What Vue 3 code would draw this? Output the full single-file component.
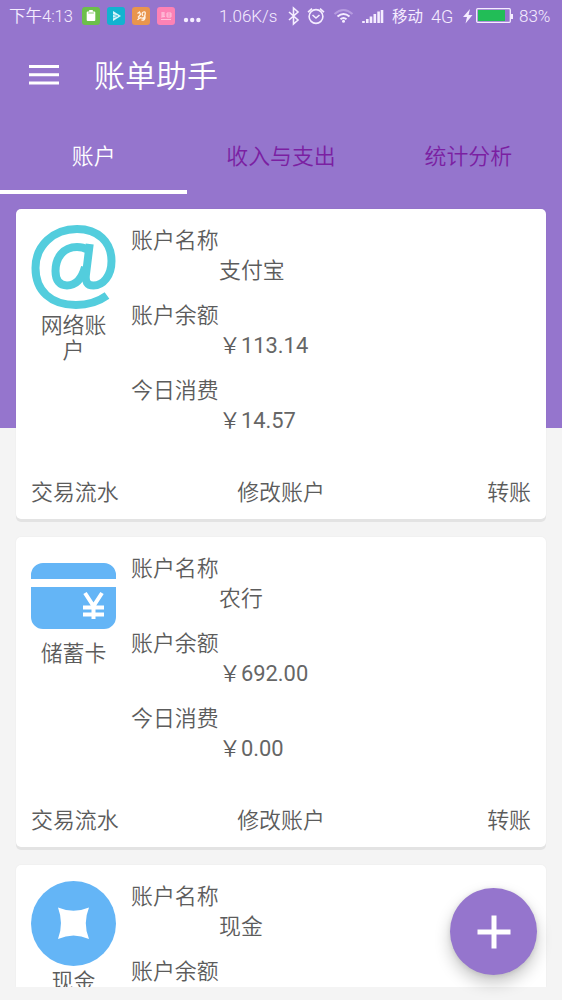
<script setup>
const tabs = ['账户', '收入与支出', '统计分析']
const accounts = [
  { kind: 'web', type: '网络账户', name: '支付宝', balance: '113.14', spent: '14.57' },
  { kind: 'card', type: '储蓄卡', name: '农行', balance: '692.00', spent: '0.00' },
  { kind: 'cash', type: '现金', name: '现金' }
]
const rowsOf = (a) => [
  { label: '账户名称', value: a.name },
  { label: '账户余额', amount: a.balance },
  { label: '今日消费', amount: a.spent }
].filter((r, i) => r.value || r.amount || i === 1)
</script>

<template>
  <div class="screen">
    <div class="status">
      <span class="clock">下午4:13</span>
      <svg class="apps" viewBox="0 0 94 18">
        <rect width="18" height="18" rx="3" fill="#6cc04a" />
        <path d="M7.200 3h3.600v1.500h1.500a1 1 0 0 1 1 1V13a1 1 0 0 1-1 1H5.700a1 1 0 0 1-1-1V5.500a1 1 0 0 1 1-1h1.500z" fill="#fff" />
        <path d="M6.200 6h5.600" stroke="#9bd585" stroke-width="1.200" />
        <rect x="25" width="18" height="18" rx="3" fill="#12b3d0" />
        <path d="M31 4l8 5-8 5z" fill="#d9f5fa" />
        <path d="M31 7.500l5 1.500-5 2" fill="none" stroke="#12b3d0" stroke-width=".6" />
        <rect x="50" width="18" height="18" rx="3" fill="#e9954d" />
        <path d="M55.500 6.500l2-1.500 1 2.500-2.500 3M61 9q-2-3 .5-4t1.500 3-2.500 2.500M55.500 13q2-3 4-2t3.500-.5q0 3-3.500 2.500" fill="none" stroke="#fff3e6" stroke-width="1.300" />
        <rect x="75" width="18" height="18" rx="3" fill="#fd82b5" />
        <path d="M79 6h4M79 8h4M81 5v5M79 10l4-.5M85 6h4v4h-4zM85 8h4M79 12.500h10" fill="none" stroke="#ffd0e4" stroke-width=".8" />
      </svg>
      <svg class="dots" viewBox="0 0 18 6" fill="#f5edff"><circle cx="3" cy="3" r="2.200" /><circle cx="9.200" cy="3" r="2.200" /><circle cx="15.400" cy="3" r="2.200" /></svg>
      <span class="speed">1.06K/s</span>
      <svg class="signals" viewBox="0 0 96 20" fill="none" stroke="#f5edff" stroke-width="1.600">
        <path d="M1 6l9 8-4.500 4V2l4.500 4-9 8" />
        <circle cx="28" cy="10.500" r="6.900" />
        <path d="M24.500 9l3.500 3 3.500-3M20 6.200l4-3.500M36 6.200l-4-3.500" />
        <path d="M46.500 8q9-8 18 0" stroke="#b69be0" stroke-width="2" />
        <path d="M49.500 10.500q6-5 12 0M52.500 13.300q3-2.500 6 0" stroke-width="2" />
        <circle cx="55.500" cy="15.300" r="1.500" fill="#f5edff" stroke="none" />
        <path d="M75.500 17v-2M79.300 17v-4M83 17v-6.500M86.800 17V8M90.600 17V5.500M94 17V4" stroke-width="2.600" />
      </svg>
      <span class="carrier">移动</span>
      <span class="net">4G</span>
      <svg class="battery" viewBox="0 0 48 18">
        <path d="M7 2L0 10h4L2.500 16.500 9.500 8H5.500z" fill="#f5edff" />
        <rect x="13.700" y="1.700" width="33.600" height="13.600" rx="1" fill="none" stroke="#f5edff" stroke-width="1.300" />
        <rect x="15" y="3" width="27" height="11" fill="#22bd57" />
      </svg>
      <i class="cap"></i>
      <span class="percent">83%</span>
    </div>

    <header class="toolbar">
      <svg class="menu" viewBox="0 0 30 22"><path d="M0 2.500h30M0 10.800h30M0 19.100h30" stroke="#fff" stroke-width="3" /></svg>
      <h1>账单助手</h1>
    </header>

    <nav class="tabs">
      <div v-for="(t, i) in tabs" :key="t" class="tab" :class="{ active: i === 0 }">{{ t }}</div>
    </nav>

    <main class="list">
      <article v-for="a in accounts" :key="a.type" class="card">
        <div class="body">
          <div class="kind">
            <svg v-if="a.kind === 'web'" class="icon" viewBox="0 0 85 85" fill="none" stroke="#53cddd" stroke-width="8">
              <path d="M76 70.500C67 77 57 80 45 80C20 80 4.500 66 4.500 43C4.500 21 22 4 46 4C67 4 80.500 17 80.500 36C80.500 51 72 60.500 62.500 60.500C56 60.500 54 56.500 55 49L58.700 19" />
              <path d="M56 24.500C53 22.500 50 22 46 22C32 22 24.500 33 24.500 46C24.500 56 29 60.500 36 60.500C46 60.500 51 53 54 42" />
            </svg>
            <svg v-else-if="a.kind === 'card'" class="icon" viewBox="0 0 85 85">
              <path d="M0 26V22A12 12 0 0 1 12 10H73A12 12 0 0 1 85 22V26zM0 34H85V64A12 12 0 0 1 73 76H12A12 12 0 0 1 0 64z" fill="#64b5f6" />
              <path d="M54 40l8.500 13L71 40M52 54.500h21M52 61.500h21M62.500 52v14" fill="none" stroke="#fff" stroke-width="4" />
            </svg>
            <svg v-else class="icon" viewBox="0 0 85 85">
              <circle cx="42.500" cy="42.500" r="42.500" fill="#64b5f6" />
              <path d="M27 26.500Q42.500 33 58 26.500Q51.500 42.500 58 58Q42.500 51 27 58Q33 42.500 27 26.500z" fill="#fff" />
            </svg>
            <div class="type">{{ a.type }}</div>
          </div>
          <dl class="rows">
            <div v-for="r in rowsOf(a)" :key="r.label" class="row">
              <dt>{{ r.label }}</dt>
              <dd v-if="r.value">{{ r.value }}</dd>
              <dd v-else-if="r.amount">￥<span class="num">{{ r.amount }}</span></dd>
            </div>
          </dl>
        </div>
        <footer v-if="a.balance" class="actions"><span>交易流水</span><span>修改账户</span><span>转账</span></footer>
      </article>
    </main>

    <button class="fab" aria-label="+">
      <svg viewBox="0 0 34 34"><path d="M17 .5v33M.5 17h33" stroke="#fff" stroke-width="5" /></svg>
    </button>
  </div>
</template>

<style>
body { background: #f4f4f4; }
</style>

<style scoped>
.screen {
  position: relative;
  width: 562px;
  height: 1000px;
  overflow: hidden;
  box-sizing: border-box;
  background: linear-gradient(#9575cd 428px, #f4f4f4 428px);
  font-family: Roboto, "Noto Sans CJK SC", sans-serif;
  font-size: 21.9px;
  font-weight: 350;
  color: #5c5c5c;
}
.num { font-weight: 400; color: #666; }
.status {
  height: 33px;
  display: flex;
  align-items: center;
  color: #f5edff;
  font-size: 17px;
  line-height: 33px;
  white-space: nowrap;
}
.status svg, .status span, .status i { flex: none; }
.clock { width: 73px; padding-left: 9px; font-size: 16.500px; }
.apps { width: 94px; height: 18px; margin-top: -2px; }
.dots { width: 18px; height: 6px; margin: 7px 0 0 7px; }
.speed { width: 61px; margin-left: 18px; margin-right: 8px; }
.signals { width: 96px; height: 20px; margin-top: -1px; }
.carrier { width: 32px; margin-left: 8px; margin-top: 2px; font-size: 15.500px; font-weight: 400; }
.net { width: 26px; margin-left: 7px; font-size: 18px; }
.battery { width: 48px; height: 18px; margin-left: 6px; margin-top: -1px; }
.cap { width: 2px; height: 5px; background: #f5edff; margin-top: -1px; }
.percent { margin-left: 6px; }
.toolbar {
  height: 84px;
  display: flex;
  align-items: center;
  padding-left: 29px;
}
.menu { width: 30px; height: 22px; }
.toolbar h1 {
  margin: 3px 0 0 35px;
  color: #fff;
  font-size: 31px;
  line-height: 40px;
  font-weight: 350;
}
.tabs {
  height: 77px;
  display: grid;
  grid-template-columns: repeat(3, 1fr);
}
.tab {
  box-sizing: border-box;
  border-bottom: 4px solid transparent;
  text-align: center;
  line-height: 79px;
  height: 77px;
  color: #7b1fa2;
}
.tab.active { color: #fff; border-bottom-color: #fff; }
.list {
  height: 793px;
  box-sizing: border-box;
  padding: 15px 16px 0;
  overflow: hidden;
}
.card {
  height: 310px;
  box-sizing: border-box;
  margin-bottom: 18px;
  padding: 17px 15px 11px;
  display: flex;
  flex-direction: column;
  justify-content: space-between;
  border-radius: 5px;
  background: #fff;
  box-shadow: 0 3px 0 #e3e3e3, 0 0 2px rgba(0, 0, 0, .06);
}
.card:last-child { height: 122px; margin-bottom: 0; border-radius: 5px 5px 0 0; }
.body { display: flex; gap: 15px; }
.kind { width: 85px; margin-top: -1px; }
.icon { display: block; width: 85px; height: 85px; }
.type { text-align: center; line-height: 25px; padding-top: 3px; }
.rows { margin: 0; display: grid; gap: 15px; align-content: start; }
.row { height: 60px; }
dt { line-height: 30px; }
dd { margin: 0 0 0 88px; line-height: 30px; }
.actions {
  display: grid;
  grid-template-columns: 1fr auto 1fr;
  line-height: 30px;
}
.actions span:last-child { text-align: right; }
.fab {
  position: absolute;
  left: 450px;
  top: 888px;
  width: 87px;
  height: 87px;
  padding: 0;
  border: 0;
  border-radius: 50%;
  display: grid;
  place-items: center;
  background: #9575cd;
  box-shadow: 0 8px 16px rgba(0, 0, 0, .22), 0 1px 5px rgba(0, 0, 0, .1);
}
.fab svg { width: 34px; height: 34px; }
</style>
